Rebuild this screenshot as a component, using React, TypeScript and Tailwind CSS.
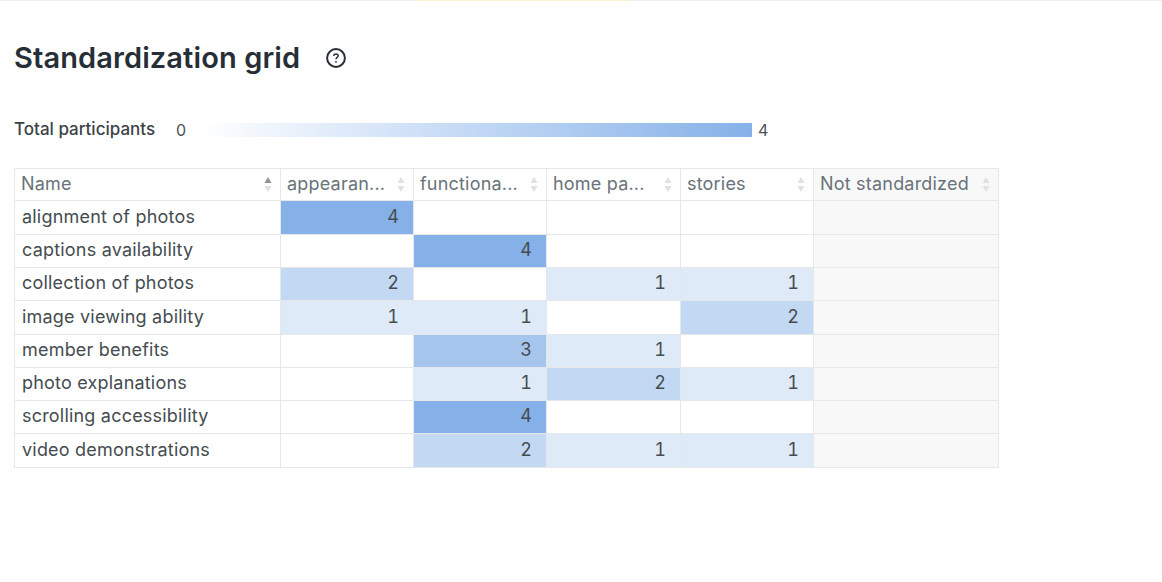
const columns = ["appearan...", "functiona...", "home pa...", "stories"];

const rows: [string, number[]][] = [
  ["alignment of photos", [4, 0, 0, 0]],
  ["captions availability", [0, 4, 0, 0]],
  ["collection of photos", [2, 0, 1, 1]],
  ["image viewing ability", [1, 1, 0, 2]],
  ["member benefits", [0, 3, 1, 0]],
  ["photo explanations", [0, 1, 2, 1]],
  ["scrolling accessibility", [0, 4, 0, 0]],
  ["video demonstrations", [0, 2, 1, 1]],
];

const shades: Record<number, string> = {
  0: "bg-white",
  1: "bg-[#deeaf8]",
  2: "bg-[#c3d8f3]",
  3: "bg-[#a6c5ec]",
  4: "bg-[#86b1e8]",
};

function SortIcon({ active = false }: { active?: boolean }) {
  return (
    <svg width="8" height="17" viewBox="0 0 8 17" className="shrink-0">
      <path d="M4 1 L7.5 7 L0.5 7 Z" fill={active ? "#8f9598" : "#dfe1e3"} />
      <path d="M4 16 L7.5 10 L0.5 10 Z" fill="#dfe1e3" />
    </svg>
  );
}

function HeaderCell({ label, active, muted }: { label: string; active?: boolean; muted?: boolean }) {
  return (
    <div
      className={`flex items-center justify-between border-r border-b border-[#e6e7e8] pl-[6px] pr-[8px] text-[#68737a] ${
        muted ? "bg-[#f8f8f8]" : "bg-white"
      }`}
    >
      <span className="whitespace-nowrap pb-[2px]">{label}</span>
      <SortIcon active={active} />
    </div>
  );
}

export default function App() {
  return (
    <div
      className="relative h-[582px] w-[1162px] overflow-hidden bg-white text-[#454c50]"
      style={{ fontFamily: '"Inter", "Open Sans", sans-serif' }}
    >
      <div className="flex h-px bg-[#eeeff0]">
        <div className="ml-[417px] h-px w-[212px] bg-[#fdf3cf]" />
      </div>

      <div className="flex h-[114px] items-center gap-[25px] pl-[14px]">
        <h1 className="pb-[2px] text-[29px] font-semibold leading-none tracking-[0.1px] text-[#262f37]">Standardization grid</h1>
        <svg width="22" height="22" viewBox="0 0 22 22" fill="none" stroke="#262f37">
          <circle cx="11" cy="11" r="8.9" strokeWidth="2" />
          <path d="M8.8 9 C8.8 7.6 9.8 6.9 11 6.9 C12.3 6.9 13.2 7.7 13.2 8.8 C13.2 10.3 11 10.4 11 12.2" strokeWidth="1.5" />
          <circle cx="11" cy="14.9" r="0.9" fill="#262f37" stroke="none" />
        </svg>
      </div>

      <div className="flex h-[30px] items-center pl-[14px] text-[16px]">
        <span className="w-[162px] whitespace-nowrap text-[17px] font-medium text-[#3c4347]">Total participants</span>
        <span className="w-[22px] text-[#4b5257]">0</span>
        <div className="h-[14px] w-[554px] bg-gradient-to-r from-white to-[#86b1e8]" />
        <span className="ml-[6px] text-[#4b5257]">4</span>
      </div>

      <div
        className="ml-[14px] mt-[23px] grid w-[985px] grid-cols-[266px_133px_133px_134px_133px_185px] grid-rows-[32px_34px_33px_33px_34px_33px_33px_33px_34px] border-t border-l border-[#e6e7e8] text-[18px] tracking-[0.2px]"
      >
        <HeaderCell label="Name" active />
        {columns.map((c) => (
          <HeaderCell key={c} label={c} />
        ))}
        <HeaderCell label="Not standardized" muted />

        {rows.map(([name, values]) => (
          <div key={name} className="contents">
            <div className="flex items-center whitespace-nowrap border-r border-b border-[#e6e7e8] bg-white pb-[3px] pl-[7px]">
              {name}
            </div>
            {values.map((v, i) => (
              <div
                key={i}
                className={`flex items-center justify-end border-r border-b border-[#e6e7e8] pb-[3px] pr-[14px] tabular-nums ${shades[v]}`}
              >
                {v > 0 ? v : ""}
              </div>
            ))}
            <div className="border-r border-b border-[#e6e7e8] bg-[#f8f8f8]" />
          </div>
        ))}
      </div>
    </div>
  );
}
